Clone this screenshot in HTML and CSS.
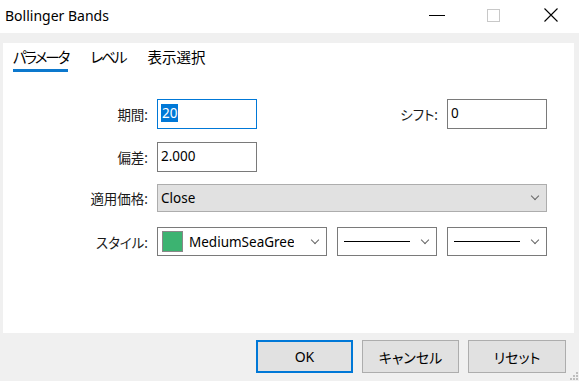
FILE: index.html
```html
<!DOCTYPE html>
<html lang="ja">
<head>
  <meta charset="UTF-8">
  <title>Bollinger Bands</title>
  <link rel="stylesheet" href="styles.css">
</head>
<body>
  <div class="titlebar">
    <span class="title">Bollinger Bands</span>
    <div class="controls">
      <span class="ctl"><svg width="16" height="16" viewBox="0 0 16 16"><path d="M0 8.5H16" stroke="#000" stroke-width="1"/></svg></span>
      <span class="ctl"><svg width="13" height="13" viewBox="0 0 13 13"><rect x="0.5" y="0.5" width="12" height="12" fill="none" stroke="#c8c8c8"/></svg></span>
      <span class="ctl"><svg width="14" height="14" viewBox="0 0 14 14"><path d="M0.5 0.5L13.5 13.5M13.5 0.5L0.5 13.5" stroke="#000" stroke-width="1.1"/></svg></span>
    </div>
  </div>

  <div class="panel">
    <div class="tabs">
      <span class="tab kana active">パラメータ</span>
      <span class="tab kana">レベル</span>
      <span class="tab">表示選択</span>
    </div>

    <div class="form">
      <div class="row">
        <label class="lbl">期間:</label>
        <div class="field focus"><span class="sel">20</span></div>
        <label class="lbl grow">シフト:</label>
        <div class="field">0</div>
      </div>
      <div class="row r2">
        <label class="lbl">偏差:</label>
        <div class="field">2.000</div>
      </div>
      <div class="row r3">
        <label class="lbl">適用価格:</label>
        <div class="combo grey">
          <span class="val">Close</span>
          <span class="chev"></span>
        </div>
      </div>
      <div class="row r4">
        <label class="lbl">スタイル:</label>
        <div class="combo color">
          <span class="swatch"></span>
          <span class="val clip">MediumSeaGreen</span>
          <span class="chev"></span>
        </div>
        <div class="combo small">
          <span class="line"></span>
          <span class="chev"></span>
        </div>
        <div class="combo small">
          <span class="line"></span>
          <span class="chev"></span>
        </div>
      </div>
    </div>
  </div>

  <div class="footer">
    <button class="btn default">OK</button>
    <button class="btn">キャンセル</button>
    <button class="btn">リセット</button>
    <svg class="grip" width="9" height="9" viewBox="0 0 9 9" fill="#bdbdbd">
      <rect x="7" y="1" width="2" height="2"/>
      <rect x="4" y="4" width="2" height="2"/><rect x="7" y="4" width="2" height="2"/>
      <rect x="1" y="7" width="2" height="2"/><rect x="4" y="7" width="2" height="2"/><rect x="7" y="7" width="2" height="2"/>
    </svg>
  </div>
</body>
</html>
```

FILE: styles.css
```css
body {
  margin: 0;
  width: 579px;
  height: 381px;
  background: #f0f0f0;
  font-family: 'Noto Sans', 'Noto Sans CJK JP', sans-serif;
  font-feature-settings: "palt";
  color: #000;
  overflow: hidden;
  position: relative;
}
.titlebar {
  height: 33px;
  background: #fff;
  display: flex;
  align-items: center;
  justify-content: space-between;
}
.title {
  padding-left: 5px;
  font-size: 14px;
  margin-top: -2px;
}
.controls {
  display: flex;
  height: 100%;
}
.ctl {
  width: 57px;
  display: flex;
  align-items: center;
  justify-content: center;
  margin-top: -3px;
}
.panel {
  margin: 10px 5px 0 3px;
  height: 290px;
  background: #fff;
}
.tabs {
  display: flex;
  padding: 3px 0 0 10px;
  font-size: 14.5px;
}
.tab {
  margin-right: 22px;
  height: 23px;
  border-bottom: 3px solid transparent;
  line-height: 22px;
}
.tab.kana {
  letter-spacing: -2px;
}
.tab.active {
  border-bottom-color: #0c78cd;
}
.form {
  padding: 27px 27px 0 0;
}
.row {
  display: flex;
  align-items: center;
  height: 30px;
  column-gap: 9px;
}
.row.r2 { margin-top: 13px; }
.row.r3 { margin-top: 12px; height: 28px; }
.row.r4 { margin-top: 15px; height: 29px; column-gap: 10px; }
.lbl {
  width: 145px;
  text-align: right;
  font-size: 13.5px;
  color: #1a1a1a;
}
.r4 .lbl { margin-right: -1px; }
.lbl.grow {
  flex: 1;
  width: auto;
}
.field {
  box-sizing: border-box;
  width: 100px;
  height: 30px;
  border: 1px solid #7a7a7a;
  padding: 0 3px;
  font-size: 13.5px;
  line-height: 27px;
}
.field.focus {
  border-color: #0078d7;
}
.sel {
  background: #0078d7;
  color: #fff;
  padding: 0 1px;
}
.combo {
  box-sizing: border-box;
  height: 100%;
  border: 1px solid #7a7a7a;
  display: flex;
  align-items: center;
  position: relative;
  font-size: 13.5px;
}
.combo.grey {
  flex: 1;
  background: #e1e1e1;
  border-color: #adadad;
  padding-left: 3px;
}
.combo.color {
  width: 170px;
  padding-left: 4px;
}
.combo.small {
  width: 100px;
  padding-left: 6px;
}
.val.clip {
  width: 105px;
  overflow: hidden;
  white-space: nowrap;
  margin-left: 6px;
}
.swatch {
  box-sizing: border-box;
  width: 21px;
  height: 21px;
  background: #3cb371;
  border: 1px solid #888;
}
.line {
  width: 66px;
  height: 0;
  border-top: 1.5px solid #000;
}
.chev {
  position: absolute;
  right: 8px;
  top: 50%;
  width: 5px;
  height: 5px;
  margin-top: -5px;
  border-right: 1px solid #666;
  border-bottom: 1px solid #666;
  transform: rotate(45deg);
}
.footer {
  display: flex;
  justify-content: flex-end;
  gap: 9px;
  padding: 7px 13px 0 0;
}
.btn {
  box-sizing: border-box;
  width: 97px;
  height: 33px;
  background: #e1e1e1;
  border: 1px solid #adadad;
  font-family: inherit;
  font-feature-settings: "palt";
  font-size: 14px;
  color: #000;
  padding: 0;
}
.btn:last-of-type {
  width: 98px;
}
.btn.default {
  border: 2px solid #0078d7;
}
.grip {
  position: absolute;
  right: 1px;
  bottom: 1px;
}
```
